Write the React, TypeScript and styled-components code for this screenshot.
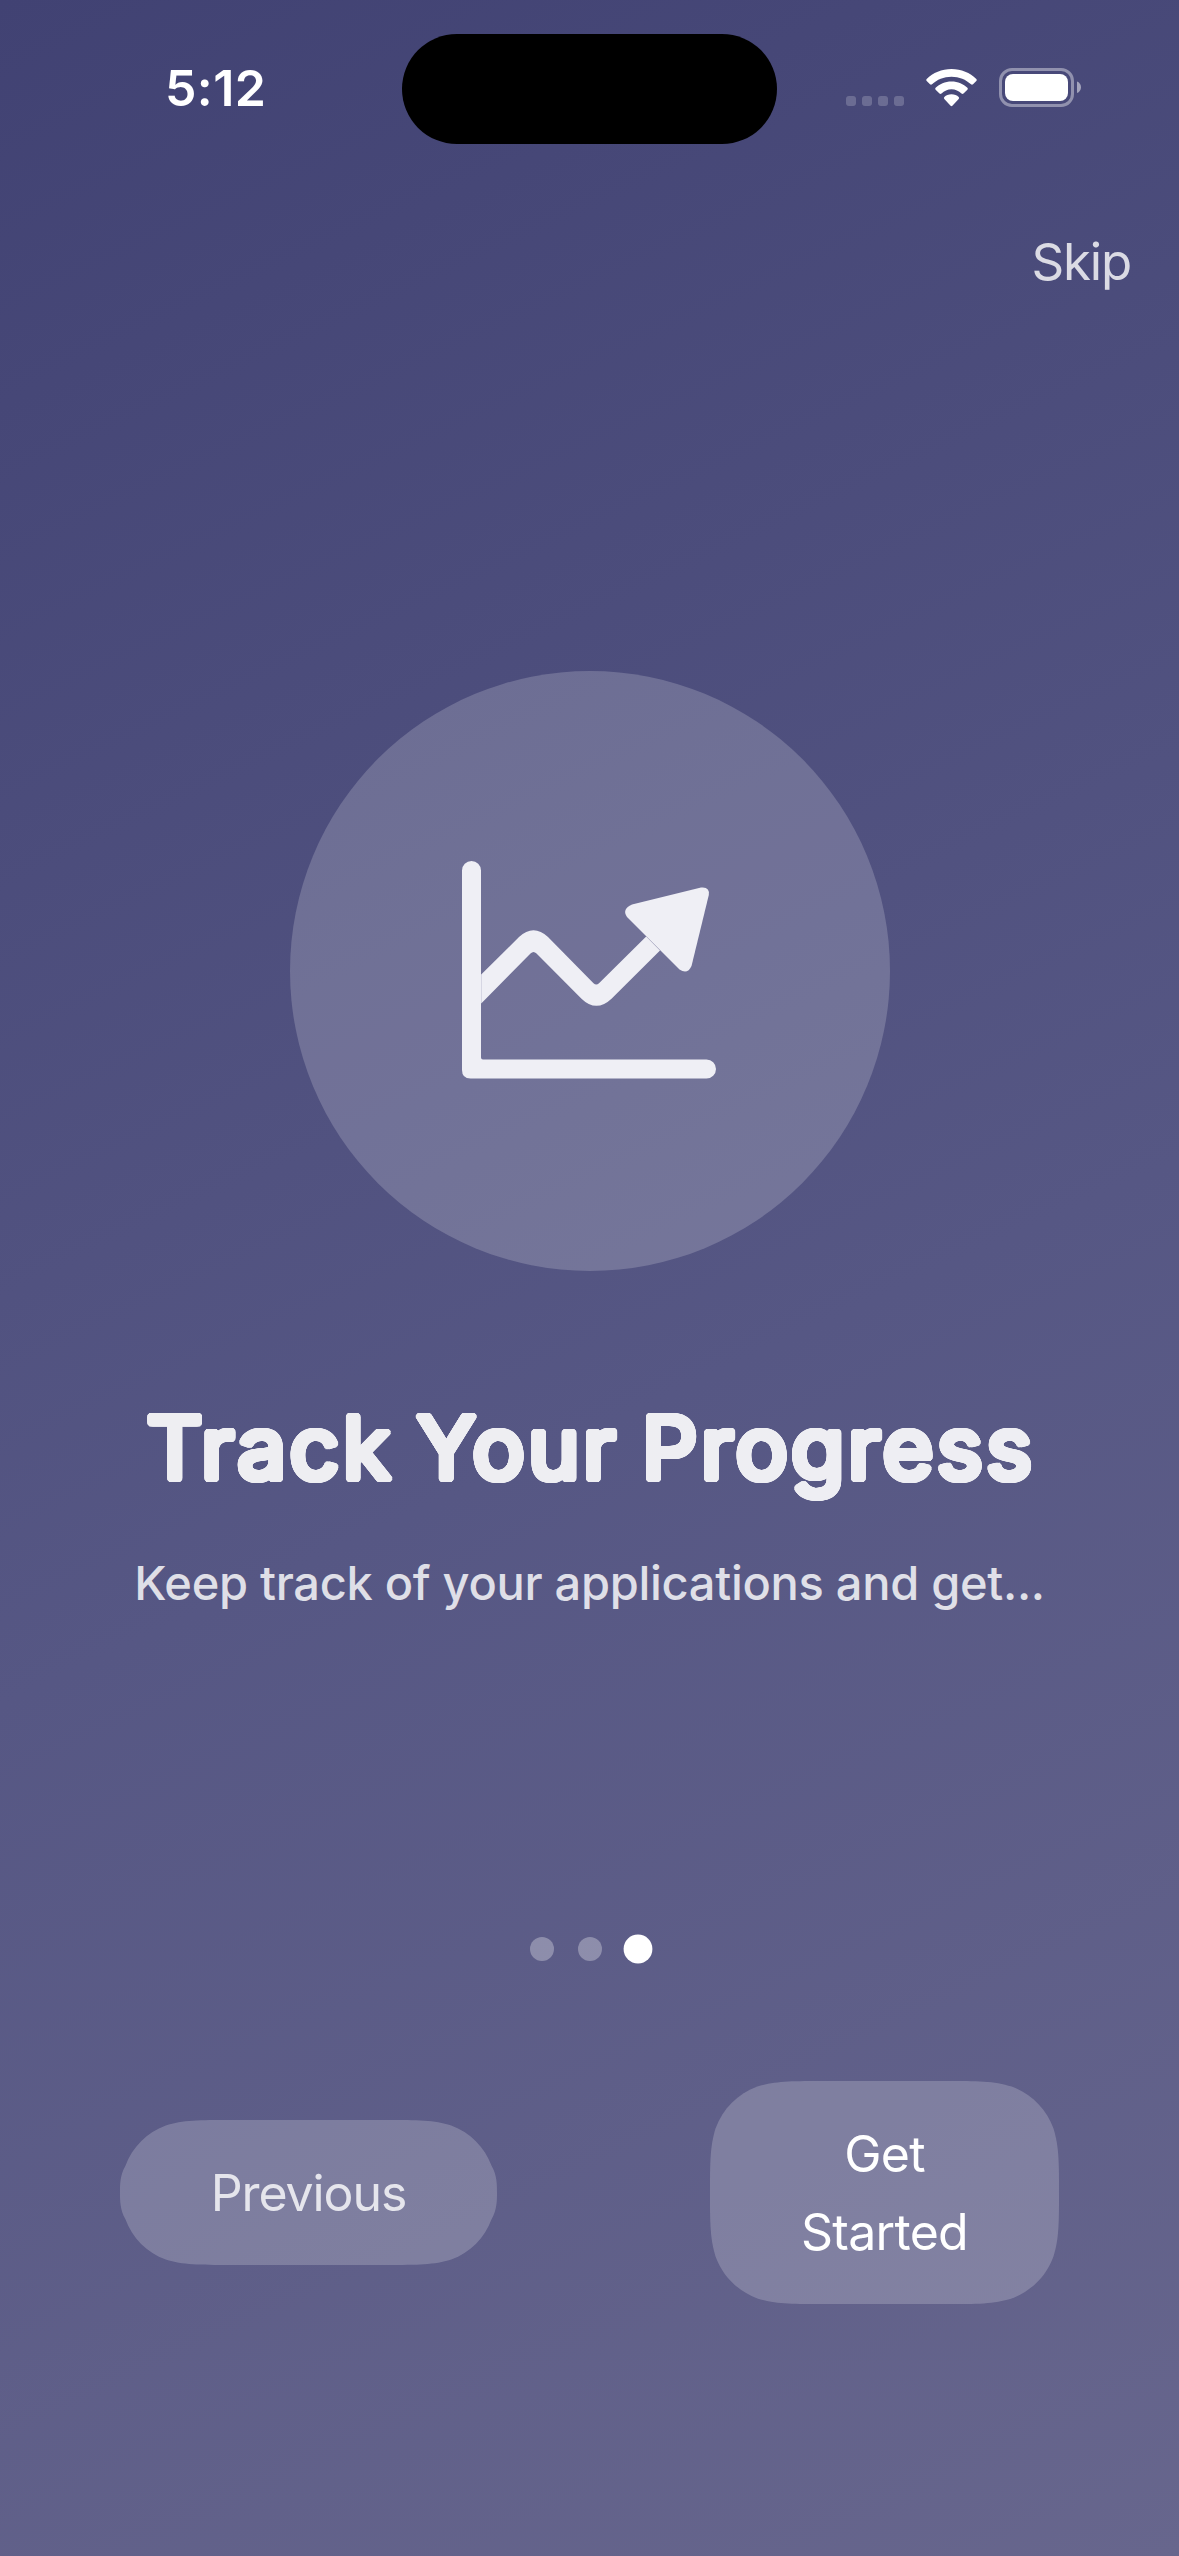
import React from "react";
import styled, { createGlobalStyle } from "styled-components";

const GlobalStyle = createGlobalStyle`
  *, *::before, *::after { box-sizing: border-box; }
  body { margin: 0; font-family: Inter, "Liberation Sans", sans-serif; }
`;

const Screen = styled.main`
  width: 1179px;
  height: 2556px;
  display: flex;
  flex-direction: column;
  color: #fff;
  overflow: hidden;
  background: linear-gradient(155.2deg, #414273 0%, #565784 55%, #67668d 100%);
`;

const StatusBar = styled.header`
  height: 177px;
  padding-top: 34px;
  display: grid;
  grid-template-columns: 402px 375px 1fr;
  align-items: start;
`;

const Clock = styled.time`
  padding: 23px 0 0 165px;
  font-size: 50px;
  line-height: 62px;
  font-weight: 600;
  letter-spacing: 0.4px;
`;

const Island = styled.div`
  height: 110px;
  border-radius: 55px;
  background: #000;
`;

const Indicators = styled.div`
  display: flex;
  align-items: flex-start;
  padding: 34px 0 0 69px;
`;

const Cellular = styled.div`
  display: flex;
  gap: 6px;
  margin: 28px 22px 0 0;
`;

const CellDot = styled.span`
  width: 10px;
  height: 10px;
  border-radius: 3px;
  background: rgba(255, 255, 255, 0.2);
`;

const WifiIcon = styled.svg`
  width: 51px;
  height: 38px;
  margin: 1px 22px 0 0;
`;

const BatteryIcon = styled.svg`
  width: 83px;
  height: 39px;
`;

const TopBar = styled.nav`
  height: 170px;
  display: flex;
  justify-content: flex-end;
  align-items: flex-start;
  padding: 54px 48px 0 0;
`;

const SkipButton = styled.button`
  border: 0;
  padding: 0;
  background: none;
  font: 400 51px/62px Inter, "Liberation Sans", sans-serif;
  letter-spacing: -1.2px;
  color: rgba(255, 255, 255, 0.8);
`;

const Page = styled.section`
  height: 1587px;
  padding-top: 324px;
  display: flex;
  flex-direction: column;
  align-items: center;
`;

const IconDisc = styled.div`
  width: 600px;
  height: 600px;
  border-radius: 50%;
  background: rgba(255, 255, 255, 0.19);
`;

const ChartIcon = styled.svg`
  display: block;
  width: 600px;
  height: 600px;
`;

/* Hard-edged shadows in a ring round off the letter ends. */
const roundedEnds = Array.from({ length: 32 }, (_, i) => {
  const a = (i / 32) * Math.PI * 2;
  return `${(Math.cos(a) * 3.4).toFixed(2)}px ${(Math.sin(a) * 3.4).toFixed(2)}px 0 #fff`;
}).join(", ");

const Title = styled.h1`
  margin: 117px 0 0;
  padding-left: 3px;
  font-size: 87px;
  line-height: 120px;
  font-weight: 400;
  letter-spacing: 3.4px;
  word-spacing: -5px;
  white-space: nowrap;
  color: #fff;
  opacity: 0.9;
  text-shadow: ${roundedEnds};
`;

const Subtitle = styled.p`
  margin: 45px 0 0;
  font-size: 47px;
  line-height: 60px;
  font-weight: 500;
  letter-spacing: -0.3px;
  white-space: nowrap;
  color: rgba(255, 255, 255, 0.81);
`;

const Pager = styled.div`
  height: 30px;
  display: flex;
  align-items: center;
  justify-content: center;
  gap: 24px;
`;

const PageDot = styled.span<{ $active?: boolean }>`
  width: 24px;
  height: 24px;
  border-radius: 50%;
  background: ${(p) => (p.$active ? "#fff" : "rgba(255, 255, 255, 0.3)")};
  transform: ${(p) => (p.$active ? "scale(1.2)" : "none")};
`;

const Actions = styled.footer`
  margin-top: 117px;
  padding: 0 120px;
  height: 223px;
  display: flex;
  align-items: center;
  justify-content: space-between;
`;

const PillButton = styled.button<{ $w: number; $h: number; $dim?: boolean; $shape: string }>`
  border: 0;
  padding: 0;
  width: ${(p) => p.$w}px;
  height: ${(p) => p.$h}px;
  background: rgba(255, 255, 255, 0.2);
  clip-path: path("${(p) => p.$shape}");
  font: 400 50px/78px Inter, "Liberation Sans", sans-serif;
  letter-spacing: ${(p) => (p.$dim ? -1.1 : -0.7)}px;
  text-align: center;
  color: rgba(255, 255, 255, ${(p) => (p.$dim ? 0.8 : 1)});
`;

/* Continuous-curvature corners: the curve eases into the straight edge. */
const smoothRect = (w: number, h: number, r: number) => {
  const ex = Math.min(1.5287 * r, w / 2);
  const ey = Math.min(1.5287 * r, h / 2);
  const c1 = Math.min(1.0885 * r, ey - (ey - 0.6315 * r) * 0.3);
  const c2 = Math.min(0.8684 * r, ey - (ey - 0.6315 * r) * 0.65);
  const a = 1.0885 * r, b = 0.8684 * r, c = 0.6315 * r, d = 0.0749 * r, e = 0.3728 * r, f = 0.1691 * r;
  return [
    `M${ex} 0 L${w - ex} 0`,
    `C${w - a} 0 ${w - b} 0 ${w - c} ${d}`,
    `C${w - e} ${f} ${w - f} ${e} ${w - d} ${c}`,
    `C${w} ${c2} ${w} ${c1} ${w} ${ey} L${w} ${h - ey}`,
    `C${w} ${h - c1} ${w} ${h - c2} ${w - d} ${h - c}`,
    `C${w - f} ${h - e} ${w - e} ${h - f} ${w - c} ${h - d}`,
    `C${w - b} ${h} ${w - a} ${h} ${w - ex} ${h} L${ex} ${h}`,
    `C${a} ${h} ${b} ${h} ${c} ${h - d}`,
    `C${e} ${h - f} ${f} ${h - e} ${d} ${h - c}`,
    `C0 ${h - c2} 0 ${h - c1} 0 ${h - ey} L0 ${ey}`,
    `C0 ${c1} 0 ${c2} ${d} ${c}`,
    `C${f} ${e} ${e} ${f} ${c} ${d}`,
    `C${b} 0 ${a} 0 ${ex} 0 Z`,
  ].join(" ");
};

export default function App() {
  return (
    <>
      <GlobalStyle />
      <Screen>
        <StatusBar>
          <Clock>5:12</Clock>
          <Island />
          <Indicators>
            <Cellular>
              <CellDot />
              <CellDot />
              <CellDot />
              <CellDot />
            </Cellular>
            <WifiIcon viewBox="0 0 51 38" fill="#fff">
              <path d="M25.5 0C35.3 0 44 3.8 50.3 10Q51.2 11 50.3 12L47 15.3Q46 16.2 45 15.3C40 10.500 33.200 7.700 25.500 7.700C17.800 7.700 11 10.500 6 15.300Q5 16.200 4 15.300L.7 12Q-.2 11 .7 10C7 3.800 15.700 0 25.500 0Z" />
              <path d="M25.500 12.400C32 12.400 37.500 14.900 41.400 18.800Q42.300 19.800 41.400 20.800L37.500 24.500Q36.500 25.400 35.500 24.500C32.800 22 29.400 20.300 25.500 20.300C21.600 20.300 18.200 22 15.500 24.500Q14.500 25.400 13.500 24.500L9.600 20.800Q8.700 19.800 9.600 18.800C13.500 14.900 19 12.400 25.500 12.400Z" />
              <path d="M25.500 25.300C28.500 25.300 30.900 26.400 32.700 28Q33.600 29 32.700 30L26.400 36.700Q25.500 37.600 24.600 36.700L18.300 30Q17.400 29 18.300 28C20.100 26.400 22.500 25.300 25.500 25.300Z" />
            </WifiIcon>
            <BatteryIcon viewBox="0 0 83 39">
              <rect x="1.5" y="1.500" width="72" height="36" rx="11.500" fill="none" stroke="#fff" strokeOpacity="0.4" strokeWidth="3" />
              <rect x="6" y="6" width="63" height="27" rx="8" fill="#fff" />
              <path d="M78 13.500C80.400 14.300 82 16.600 82 19.300S80.400 24.300 78 25.100Z" fill="#fff" fillOpacity="0.5" />
            </BatteryIcon>
          </Indicators>
        </StatusBar>
        <TopBar>
          <SkipButton>Skip</SkipButton>
        </TopBar>
        <Page>
          <IconDisc>
            <ChartIcon viewBox="290 671 600 600">
              <g fill="#efeff5">
                <path d="M462 870.500A9.500 9.500 0 0 1 481 870.500V1057.500Q481 1059.500 483 1059.500H706.500A9.500 9.500 0 0 1 706.500 1078.500H470.500Q462 1078.500 462 1070Z" />
                <path d="M481.200 974.500L519 937Q533.500 923.500 548 937L593.500 983.200Q596.300 985.600 599 983.200L646.200 936.600L660 950.400L611.500 998.700Q596.300 1013 581.500 998.700L536.500 953.600Q533.500 950.300 530.500 953.600L481.200 1003.500Z" />
                <path d="M632 904.600L701 887.500Q710 886.500 708.800 895L691.500 966Q687.500 975 679.500 969.500L627 917Q621.500 909.500 632 904.600Z" />
              </g>
            </ChartIcon>
          </IconDisc>
          <Title>Track Your Progress</Title>
          <Subtitle>Keep track of your applications and get...</Subtitle>
        </Page>
        <Pager>
          <PageDot />
          <PageDot />
          <PageDot $active />
        </Pager>
        <Actions>
          <PillButton $w={377} $h={145} $dim $shape={smoothRect(377, 145, 72.5)}>
            Previous
          </PillButton>
          <PillButton $w={349} $h={223} $shape={smoothRect(349, 223, 75)}>
            Get
            <br />
            Started
          </PillButton>
        </Actions>
      </Screen>
    </>
  );
}
